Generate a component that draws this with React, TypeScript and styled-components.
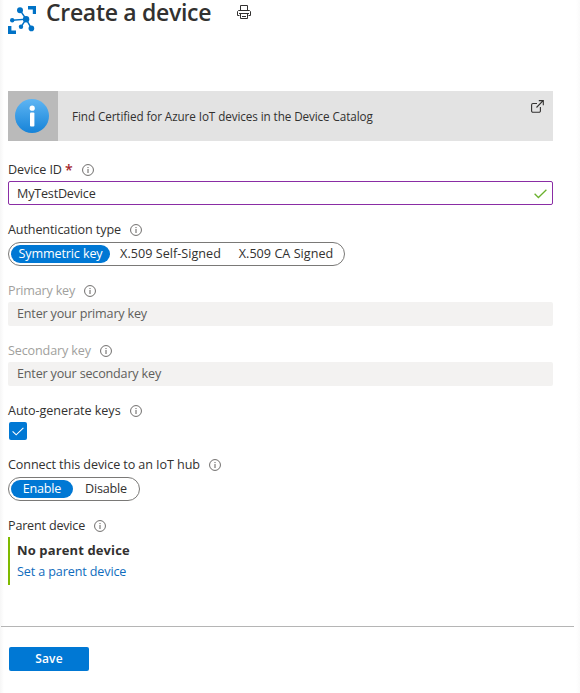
import React from "react";
import styled, { createGlobalStyle } from "styled-components";

const GlobalStyle = createGlobalStyle`
  * { box-sizing: border-box; }
  body { margin: 0; background: #fff; }
`;

const Page = styled.main`
  height: 693px;
  overflow: hidden;
  padding: 0 27px 0 8px;
  background: linear-gradient(90deg, #f6f6f6 0, #fff 4px, #fff 576px, #fafafa 580px);
  color: #323130;
  font: 400 12.6px/18px "Open Sans", "Noto Sans", sans-serif;
`;

const Text = styled.span<{ $ls?: number }>`
  white-space: pre;
  letter-spacing: ${(p) => p.$ls ?? 0}px;
`;

const Header = styled.header`
  display: flex;
  align-items: flex-start;
  height: 91px;
`;

const HubIcon = styled.svg`
  width: 28px;
  height: 28px;
  margin-top: 6px;
`;

const Title = styled.h1`
  flex: none;
  margin: 0 0 0 10px;
  font-size: 23px;
  line-height: 24px;
  font-weight: 600;
  letter-spacing: -0.3px;
  white-space: pre;
`;

const PrintIcon = styled.svg`
  width: 16px;
  height: 16px;
  margin: 4px 0 0 25px;
`;

const Banner = styled.section`
  display: flex;
  align-items: center;
  height: 50px;
  background: #e3e3e3;
  font-size: 11.7px;
`;

const BannerBadge = styled.div`
  display: flex;
  align-items: center;
  justify-content: center;
  width: 50px;
  height: 50px;
  margin-right: 14px;
  padding-right: 2px;
  background: #bababa;
`;

const ExternalIcon = styled.svg`
  align-self: flex-start;
  width: 13px;
  height: 13px;
  margin: 9px 9px 0 auto;
`;

const Field = styled.section<{ $gap?: number }>`
  margin-top: ${(p) => p.$gap ?? 12}px;
`;

const Label = styled.div<{ $muted?: boolean; $drop?: number }>`
  display: flex;
  align-items: center;
  height: 24px;
  padding-top: ${(p) => p.$drop ?? 0}px;
  color: ${(p) => (p.$muted ? "#a19f9d" : "#323130")};
`;

const LabelText = styled(Text)<{ $w: number }>`
  width: ${(p) => p.$w}px;
  margin-right: 9px;
`;

const Star = styled.span`
  color: #a4262c;
  font-size: 14px;
  font-weight: 600;
`;

const Info = styled.svg`
  width: 12px;
  height: 12px;
  flex: none;
`;

const Input = styled.div<{ $active?: boolean }>`
  display: flex;
  align-items: center;
  justify-content: space-between;
  height: 24px;
  padding: ${(p) => (p.$active ? "1px 5px 0 8px" : "0 9px")};
  border: ${(p) => (p.$active ? "1px solid #8a2da5" : "0")};
  border-radius: 2px;
  background: ${(p) => (p.$active ? "#fff" : "#f3f2f1")};
  color: ${(p) => (p.$active ? "#323130" : "#605e5c")};
`;

const Pills = styled.div<{ $w: number }>`
  display: flex;
  width: ${(p) => p.$w}px;
  height: 24px;
  padding: 2px;
  border: 1px solid #7a7977;
  border-radius: 12px;
  background: #fff;
`;

const Pill = styled.div<{ $w: number; $on?: boolean }>`
  display: flex;
  align-items: center;
  justify-content: center;
  width: ${(p) => p.$w}px;
  height: 18px;
  flex: none;
  border-radius: 9px;
  background: ${(p) => (p.$on ? "#0078d4" : "transparent")};
  color: ${(p) => (p.$on ? "#fff" : "#323130")};
`;

const Checkbox = styled.div`
  display: flex;
  align-items: center;
  justify-content: center;
  width: 18px;
  height: 18px;
  margin-left: 1px;
  border-radius: 2px;
  background: #0078d4;
`;

const Parent = styled.div`
  height: 48px;
  padding: 3px 0 0 7px;
  border-left: 2px solid #7fba00;
`;

const ParentName = styled.div`
  height: 21px;
  font-size: 13px;
  line-height: 20px;
  font-weight: 700;
  letter-spacing: 0.12px;
`;

const Link = styled.a`
  display: block;
  color: #0f6cbd;
  line-height: 21px;
  letter-spacing: -0.13px;
`;

const Divider = styled.hr`
  height: 1px;
  margin: 41px -21px 20px -7px;
  border: 0;
  background: #b5b5b5;
`;

const SaveButton = styled.button`
  display: block;
  width: 80px;
  height: 24px;
  margin-left: 1px;
  padding: 0;
  border: 0;
  border-radius: 2px;
  background: #0078d4;
  color: #fff;
  font: 600 12px/24px "Open Sans", "Noto Sans", sans-serif;
  letter-spacing: 0.2px;
`;

const InfoMark = () => (
  <Info viewBox="0 0 12 12">
    <circle cx="6" cy="6" r="5.45" fill="none" stroke="#605e5c" strokeWidth="0.9" />
    <path d="M6 5v4M6 3v1.1" stroke="#605e5c" strokeWidth="1" />
  </Info>
);

interface FieldLabelProps {
  text: string;
  width: number;
  ls: number;
  muted?: boolean;
  drop?: number;
}

const FieldLabel = ({ text, width, ls, muted, drop }: FieldLabelProps) => (
  <Label $muted={muted} $drop={drop}>
    <LabelText $w={width} $ls={ls}>{text}</LabelText>
    <InfoMark />
  </Label>
);

export default function App() {
  return (
    <Page>
      <GlobalStyle />
      <Header>
        <HubIcon viewBox="0 0 28 28">
          <g fill="#0072c6">
            <path d="M20 0h8v8h-3.2V3.6H20zM0 20h3.4v4.6H8V28H0z" />
            <circle cx="12" cy="4.2" r="3" />
            <circle cx="18.1" cy="13.2" r="3.2" />
            <circle cx="4.2" cy="14.2" r="2.2" />
            <circle cx="13" cy="20.8" r="2.2" />
            <circle cx="23.4" cy="22.4" r="2.8" />
          </g>
          <path d="M12 4.2l6.1 9L4.2 14.2M13 20.8l5.1-7.6 5.3 9.2" fill="none" stroke="#0072c6" strokeWidth="1.5" />
        </HubIcon>
        <Title>Create a device</Title>
        <PrintIcon viewBox="0 0 16 16" fill="none" stroke="#323130" strokeWidth="1">
          <path d="M4.5 6.5v-5h7v5M3.5 11.5h-2v-4l1-1h11l1 1v4h-2M4.5 9.5h7v5h-7zM3 9.5h10M6 12.5h4" />
        </PrintIcon>
      </Header>

      <Banner>
        <BannerBadge>
          <svg width="34" height="34" viewBox="0 0 34 34">
            <defs>
              <linearGradient id="badge" x2="0" y2="1">
                <stop stopColor="#5eb5f3" />
                <stop offset="1" stopColor="#1683d8" />
              </linearGradient>
            </defs>
            <circle cx="17" cy="17" r="17" fill="url(#badge)" />
            <circle cx="17.2" cy="9.2" r="2.6" fill="#fff" />
            <rect x="15" y="13.5" width="4.4" height="14" rx="1" fill="#fff" />
          </svg>
        </BannerBadge>
        <Text $ls={-0.09}>Find Certified for Azure IoT devices in the Device Catalog</Text>
        <ExternalIcon viewBox="0 0 13 13" fill="none" stroke="#323130" strokeWidth="1.1">
          <path d="M6 3.5H2A1.4 1.4 0 0 0 .6 4.9v6A1.4 1.4 0 0 0 2 12.3h6a1.4 1.4 0 0 0 1.4-1.4V7M5.5 7.5l6.6-6.9M7.8.6h4.5v4.6" />
        </ExternalIcon>
      </Banner>

      <Field $gap={16}>
        <Label $drop={2}>
          <Text $ls={-0.09}>Device ID </Text>
          <LabelText $w={8}><Star>*</Star></LabelText>
          <InfoMark />
        </Label>
        <Input $active>
          <Text $ls={-0.2}>MyTestDevice</Text>
          <svg width="13" height="10" viewBox="0 0 13 10">
            <path d="M.6 4.8l3.8 3.7L12.4.8" fill="none" stroke="#6bb12e" strokeWidth="1.3" />
          </svg>
        </Input>
      </Field>

      <Field $gap={13}>
        <FieldLabel text="Authentication type" width={113} ls={-0.12} />
        <Pills $w={337}>
          <Pill $w={99} $on><Text $ls={-0.13}>Symmetric key</Text></Pill>
          <Pill $w={121}><Text $ls={0.03}>X.509 Self-Signed</Text></Pill>
          <Pill $w={110}><Text $ls={0.03}>X.509 CA Signed</Text></Pill>
        </Pills>
      </Field>

      <Field>
        <FieldLabel text="Primary key" width={67} ls={-0.2} muted drop={1} />
        <Input><Text $ls={-0.19}>Enter your primary key</Text></Input>
      </Field>

      <Field>
        <FieldLabel text="Secondary key" width={83} ls={-0.14} muted drop={1} />
        <Input><Text $ls={-0.19}>Enter your secondary key</Text></Input>
      </Field>

      <Field>
        <FieldLabel text="Auto-generate keys" width={113} ls={-0.05} drop={2} />
        <Checkbox>
          <svg width="12" height="9" viewBox="0 0 12 9">
            <path d="M.6 4.3l3.6 3.5L11.4.8" fill="none" stroke="#fff" strokeWidth="1.1" />
          </svg>
        </Checkbox>
      </Field>

      <Field $gap={13}>
        <FieldLabel text="Connect this device to an IoT hub" width={192} ls={-0.09} />
        <Pills $w={132}>
          <Pill $w={62} $on><Text $ls={-0.2}>Enable</Text></Pill>
          <Pill $w={66}><Text $ls={-0.18}>Disable</Text></Pill>
        </Pills>
      </Field>

      <Field>
        <FieldLabel text="Parent device" width={77} ls={-0.2} drop={1} />
        <Parent>
          <ParentName>No parent device</ParentName>
          <Link>Set a parent device</Link>
        </Parent>
      </Field>

      <Divider />
      <SaveButton>Save</SaveButton>
    </Page>
  );
}
